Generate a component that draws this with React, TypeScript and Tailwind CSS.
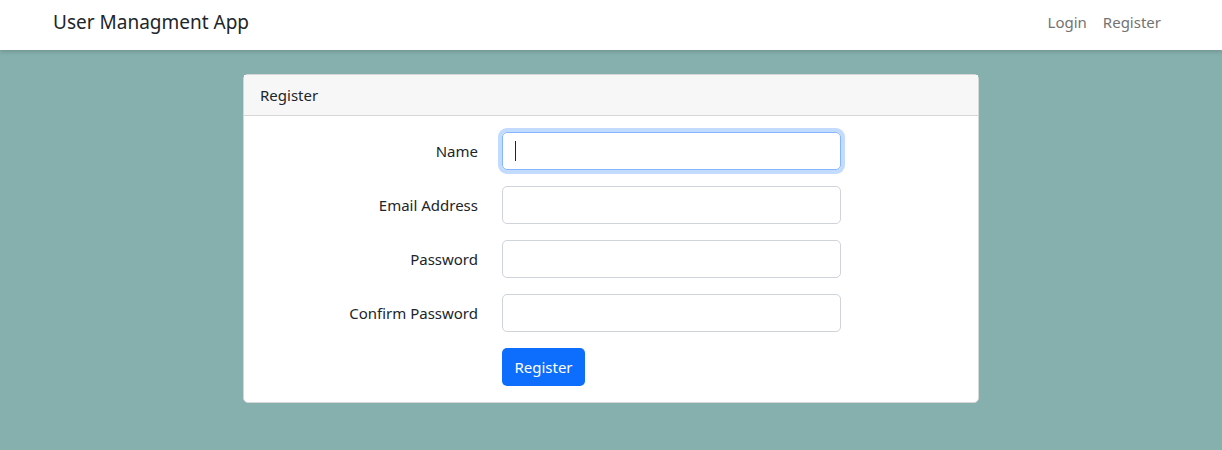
export default function App() {
  return (
    <div
      className="min-h-[450px] bg-[#86b0ad] text-[#212529]"
      style={{ fontFamily: '"Noto Sans", "Open Sans", sans-serif' }}
    >
      <nav className="h-[50px] bg-white shadow-[0_2px_4px_rgba(0,0,0,0.15)]">
        <div className="mx-auto flex h-full max-w-[1140px] items-center justify-between px-3 pb-[5px]">
          <span className="text-[19px] text-[#212529]">User Managment App</span>
          <div className="flex text-[15px] text-[#737373]">
            <span className="px-2">Login</span>
            <span className="px-2">Register</span>
          </div>
        </div>
      </nav>

      <div className="mx-auto max-w-[1140px] px-3 pt-6">
        <div className="ml-[190px] w-[736px] rounded-[5px] border border-[#d6d6d6] bg-white">
          <div className="h-[41px] border-b border-[#d6d6d6] bg-[#f7f7f7] px-4 pt-[9px] text-[15px]">
            Register
          </div>
          <form className="p-4" onSubmit={(e) => e.preventDefault()}>
            <Field label="Name" focused />
            <Field label="Email Address" />
            <Field label="Password" />
            <Field label="Confirm Password" />
            <div className="flex">
              <div className="w-[242px]" />
              <button
                type="button"
                className="h-[38px] w-[83px] rounded-[5px] bg-[#0d6efd] text-[15px] text-white"
              >
                Register
              </button>
            </div>
          </form>
        </div>
      </div>
    </div>
  );
}

function Field({ label, focused }: { label: string; focused?: boolean }) {
  return (
    <div className="mb-4 flex items-center">
      <label className="w-[218px] text-right text-[15px]">{label}</label>
      <div className="ml-6">
        {focused ? (
          <div className="flex h-[38px] w-[339px] items-center rounded-[5px] border border-[#86b7fe] px-3 shadow-[0_0_0_4px_rgba(13,110,253,0.25)]">
            <span className="h-[20px] w-px bg-[#212529]" />
          </div>
        ) : (
          <div className="h-[38px] w-[339px] rounded-[5px] border border-[#ced4da]" />
        )}
      </div>
    </div>
  );
}
